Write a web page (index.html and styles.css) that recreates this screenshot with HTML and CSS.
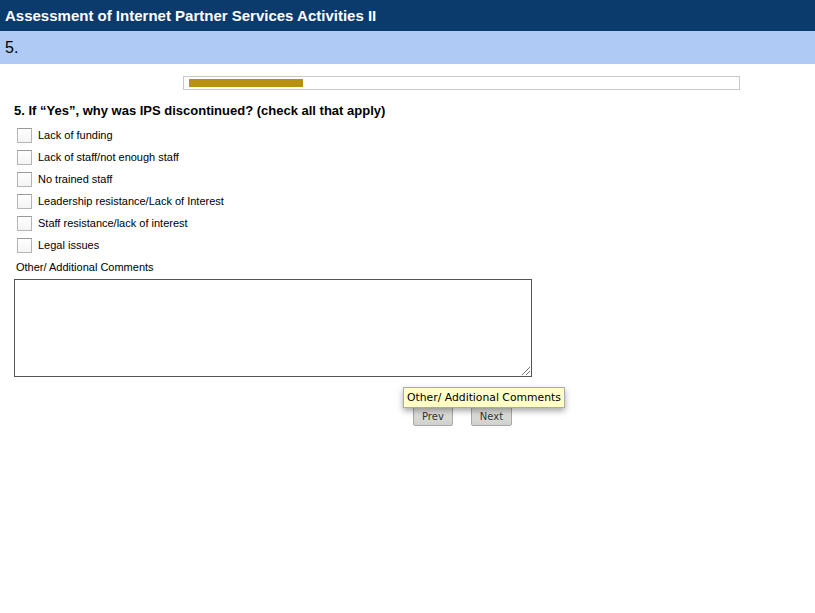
FILE: index.html
```html
<!DOCTYPE html>
<html>
<head>
<title>Assessment of Internet Partner Services Activities II</title>
<link rel="stylesheet" href="styles.css">
</head>
<body>
<div class="title-bar">Assessment of Internet Partner Services Activities II</div>
<div class="page-bar">5.</div>

<div class="progress"><div class="progress-fill" style="width:114px"></div></div>

<div class="question">
<h3 class="q-title">5. If &ldquo;Yes&rdquo;, why was IPS discontinued? (check all that apply)</h3>
<ul class="choices">
<li><span class="box"></span>Lack of funding</li>
<li><span class="box"></span>Lack of staff/not enough staff</li>
<li><span class="box"></span>No trained staff</li>
<li><span class="box"></span>Leadership resistance/Lack of Interest</li>
<li><span class="box"></span>Staff resistance/lack of interest</li>
<li><span class="box"></span>Legal issues</li>
</ul>
<div class="other-label">Other/ Additional Comments</div>
<div class="comments"><span class="grip"></span></div>
</div>

<div class="nav">
<span class="btn">Prev</span>
<span class="btn">Next</span>
<div class="tooltip">Other/ Additional Comments</div>
</div>
</body>
</html>
```

FILE: styles.css
```css
/* survey page */

body
{ margin: 0;
  background: #fff;
  font-family: "Liberation Sans", Arial, sans-serif;
  color: #000;
}

.title-bar
{ height: 31px;
  line-height: 31px;
  padding-left: 5px;
  background-color: #0b3a6d;
  color: #fff;
  font-size: 15px;
  font-weight: bold;
}

.page-bar
{ height: 33px;
  line-height: 33px;
  padding-left: 5px;
  background-color: #aecaf5;
  font-size: 16px;
}

.progress
{ width: 545px;
  height: 8px;
  margin: 12px 0 0 183px;
  border: 1px solid #c8c8c8;
  padding: 2px 5px;
  box-sizing: content-box;
}

.progress-fill
{ height: 8px;
  background-color: #b8920b;
}

.question
{ padding-left: 14px;
}

h3.q-title
{ margin: 13px 0 6px 0;
  font-size: 13px;
  font-weight: bold;
}

ul.choices
{ list-style: none;
  margin: 0;
  padding: 0 0 0 3px;
}

ul.choices li
{ display: flex;
  align-items: center;
  height: 22px;
  font-size: 11px;
}

span.box
{ width: 13px;
  height: 13px;
  margin-right: 6px;
  border: 1px solid #b4b4b4;
  border-top-color: #9a9a9a;
  background: linear-gradient(#fff, #f4f4f4);
}

.other-label
{ margin: 5px 0 0 2px;
  font-size: 11px;
  height: 14px;
}

.comments
{ position: relative;
  width: 516px;
  height: 96px;
  margin-top: 4px;
  border: 1px solid #555;
}

span.grip
{ position: absolute;
  right: 1px;
  bottom: 1px;
  width: 8px;
  height: 8px;
  background: linear-gradient(135deg, transparent 45%, #777 45%, #777 52%, transparent 52%, transparent 70%, #777 70%, #777 77%, transparent 77%);
}

.nav
{ position: relative;
  display: flex;
  gap: 18px;
  margin: 30px 0 0 413px;
}

span.btn
{ display: inline-block;
  height: 17px;
  line-height: 17px;
  padding: 0 8px;
  border: 1px solid #a9a9a9;
  border-radius: 2px;
  background: linear-gradient(#e4e4e0, #d0d0cc);
  color: #333;
  font-family: "DejaVu Sans", sans-serif;
  font-size: 10px;
}

.tooltip
{ position: absolute;
  left: -10px;
  top: -20px;
  padding: 3px 3px;
  border: 1px solid #aaa;
  background-color: #ffffc6;
  box-shadow: 0 3px 6px rgba(0,0,0,0.35);
  color: #000;
  font-family: "DejaVu Sans", sans-serif;
  font-size: 10.8px;
  line-height: 13px;
  white-space: nowrap;
}
```
